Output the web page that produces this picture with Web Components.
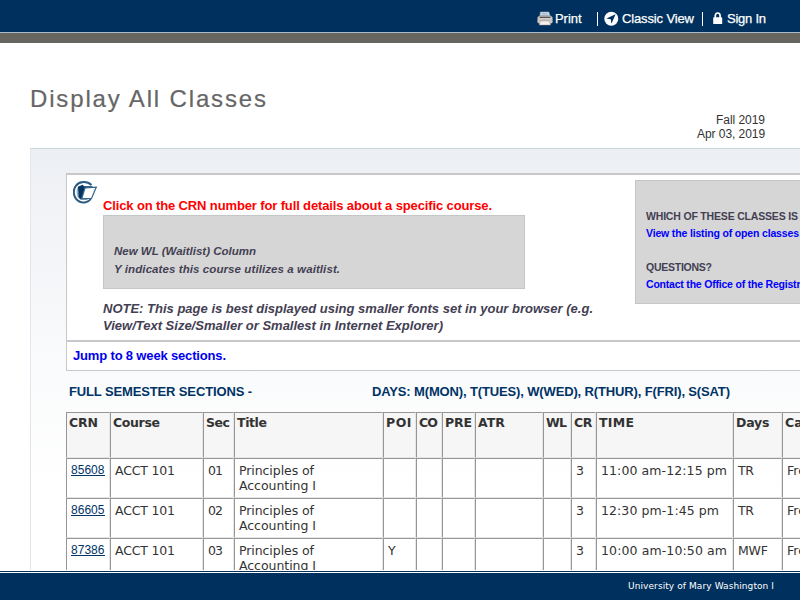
<!DOCTYPE html>
<html lang="en"><head><meta charset="utf-8"><title>Display All Classes</title>
<style>html,body{margin:0;height:100%;overflow:hidden;background:#fff;font-family:"Liberation Sans",Arial,sans-serif;color:#333}</style></head>
<body><classes-page></classes-page>
<script>
class TextLine extends HTMLElement{
  connectedCallback(){
    this.attachShadow({mode:'open'}).innerHTML='<style>:host{display:block;white-space:nowrap}span{display:inline-block;text-decoration:inherit}</style><span><slot></slot></span>';
    const s=this.shadowRoot.querySelector('span'),w=+this.getAttribute('width');
    if(w){s.style.letterSpacing='0px';s.style.letterSpacing=((w-s.getBoundingClientRect().width)/(this.textContent.length-1))+'px';}
  }
}
class TopBar extends HTMLElement{
  constructor(){super();this.attachShadow({mode:'open'}).innerHTML=`<style>
:host{display:flex;height:32px;background:#00305d;border-bottom:1px solid #a9bac8;box-shadow:0 10px #666560;color:#fff;font-size:13px;line-height:15px;-webkit-text-stroke:.25px #fff}
nav{display:flex;padding:11px 0 0 537px}svg{display:block;flex:none}text-line{flex:none}
i{width:1px;height:14px;background:#fff;margin-top:1px}
</style><nav>
<svg width="16" height="15" viewBox="0 0 16 15"><path d="M3 5 3.300 1h8.500l1.200 4z" fill="#dceaf5" stroke="#93a5b5" stroke-width=".6"/><path d="M4.500 2.500h6M4.500 4h7" stroke="#7fa3c6" stroke-width=".7"/><path d="M.8 6 2.500 4.800h11L15.300 6l.4 5-1.500 1.500H2L.3 11z" fill="#d4d2d0" stroke="#8c8a89" stroke-width=".6"/><path d="M2.500 6.300h11" stroke="#44464b" stroke-width="1.200"/><path d="M1 9h14" stroke="#a9a4a0" stroke-width=".8"/><path d="m3.500 10-1.200 4h11.200l-1.200-4z" fill="#f8f0ec" stroke="#9e9995" stroke-width=".5"/></svg>
<text-line width="26.500" style="margin-left:2px;width:27px">Print</text-line><i style="margin-left:15px"></i>
<svg style="margin-left:6px" width="15" height="15" viewBox="0 0 15 15"><circle cx="7.300" cy="7.700" r="7" fill="#fff"/><path d="M11.600 3.300 2.400 7.600 6.800 8.200 7.400 12.700z" fill="#00305d"/></svg>
<text-line width="72" style="margin-left:3px;width:72px">Classic View</text-line><i style="margin-left:8px"></i>
<svg style="margin-left:10px" width="10" height="14" viewBox="0 0 10 14"><path d="M2.300 7V4.800Q2.300 2 4.700 2t2.400 2.800V7" fill="none" stroke="#fff" stroke-width="1.700"/><rect x=".2" y="6.300" width="9" height="6.800" rx=".7" fill="#fff"/></svg>
<text-line width="39" style="margin-left:4px">Sign In</text-line></nav>`}
}
class PageHeading extends HTMLElement{
  constructor(){super();this.attachShadow({mode:'open'}).innerHTML=`<style>
:host{display:flex;height:115px;box-sizing:border-box;width:765px;padding-left:30px;justify-content:space-between}
h1{margin:0;padding-top:52px;font:400 24px/28px "Liberation Sans",Arial,sans-serif;color:#666;-webkit-text-stroke:.2px #666}
aside{padding-top:80px;font-size:12px;line-height:14px;display:flex;flex-direction:column;align-items:flex-end}
</style><h1><text-line width="236">Display All Classes</text-line></h1><aside><text-line width="49">Fall 2019</text-line><text-line width="68">Apr 03, 2019</text-line></aside>`}
}
class GreyPanel extends HTMLElement{
  constructor(){super();this.attachShadow({mode:'open'}).innerHTML=`<style>:host{display:block;box-sizing:border-box;background:#d6d6d6;border:1px solid #c5c6c6;color:#434053}</style><slot></slot>`}
}
class FolderIcon extends HTMLElement{
  constructor(){super();this.attachShadow({mode:'open'}).innerHTML=`<style>:host,svg{display:block}</style>
<svg width="25" height="23" viewBox="0 0 25 23"><path d="M18.500 4C14-.3 6.500.2 3 4.600c-4 5.200-2.200 13.200 3.300 15.900 4 2 9 .8 11.600-2.500" fill="none" stroke="#2c5b84" stroke-width="2"/><path d="M6.500 5C3 8 3.500 15.500 7.500 18.500h7" fill="none" stroke="#7997ae"/><path d="M5 5.800 9.500 3.800 11 5.300h8.500v2L11 18H7.500L5.500 16z" fill="#003462"/><path d="m12 6.900 11.300-.8L18.500 17.500H8.800z" fill="#fff" stroke="#35678e" stroke-width="1.200"/></svg>`}
}
class NoticeBox extends HTMLElement{
  constructor(){super();this.attachShadow({mode:'open'}).innerHTML=`<style>
:host{display:block;width:860px;height:198px;box-sizing:border-box;background:#fff;border:1px solid #c8c8cb;border-top-width:2px;font-weight:700;font-size:13px}
section{display:flex;height:165px}
folder-icon{margin:6px 0 0 6px;width:24px;flex:none}
.main{margin-left:6px;width:532px;flex:none;color:#434053}
.red{color:#f00;line-height:15px;padding-top:23px}
.wl{width:422px;height:74px;margin-top:2px;padding:26px 0 0 10px;font-size:11.500px;line-height:18px;font-style:italic}
.note{font-style:italic;line-height:17px;margin-top:11px}
.right{width:280px;height:124px;flex:none;margin-top:5px;padding:27px 0 0 10px;font-size:10.500px;line-height:17px}
a{color:#00e;text-decoration:none}
.right a{color:#00f}
footer{border-top:2px solid #c8c8cb;height:28px;padding:6px;box-sizing:border-box;line-height:15px}
</style><section><folder-icon></folder-icon><div class="main">
<text-line class="red" width="389">Click on the CRN number for full details about a specific course.</text-line>
<grey-panel class="wl"><text-line width="142">New WL (Waitlist) Column</text-line><text-line width="226">Y indicates this course utilizes a waitlist.</text-line></grey-panel>
<div class="note"><text-line width="490">NOTE: This page is best displayed using smaller fonts set in your browser (e.g.</text-line><text-line width="340">View/Text Size/Smaller or Smallest in Internet Explorer)</text-line></div></div>
<grey-panel class="right"><text-line width="152">WHICH OF THESE CLASSES IS</text-line><a><text-line width="153">View the listing of open classes</text-line></a><br><text-line width="66">QUESTIONS?</text-line><a><text-line width="164">Contact the Office of the Registrar</text-line></a></grey-panel></section>
<footer><a><text-line width="153">Jump to 8 week sections.</text-line></a></footer>`}
}
class ClassTable extends HTMLElement{
  constructor(){super();
    const cols=[44,93,31,149,33,26,33,68,28,25,137,49,80];
    const cell=(t,w,tag='td')=>`<${tag}>${t?`<text-line${w?` width="${w}"`:''}>${t}</text-line>`:''}</${tag}>`;
    const heads=[['CRN',29],['Course',47],['Sec',24],['Title',30],['POI',25.5],['CO',19],['PRE',27],['ATR',27],['WL',21],['CR',18.5],['TIME',35],['Days',33.5],['Campus']];
    const rows=[['85608','01','','11:00 am-12:15 pm',126,'TR',16],['86605','02','','12:30 pm-1:45 pm',118,'TR',16],['87386','03','Y','10:00 am-10:50 am',126,'MWF',30]];
    this.attachShadow({mode:'open'}).innerHTML=`<style>
:host{display:block;font-family:"DejaVu Sans",Verdana,sans-serif;font-size:12.500px;line-height:15px;color:#333}
table{border-collapse:separate;border-spacing:0;table-layout:fixed;width:796px}
td,th{box-sizing:border-box;border-top:1px solid #969696;border-left:1px solid #969696;border-right:1px solid #e6e6e6;border-bottom:1px solid #e6e6e6;vertical-align:top;text-align:left}
th{height:46px;background:#f6f6f6;padding:2px 0 0 2px}td{height:40px;padding:4px 0 0 4px}
a{display:block;color:#003366;font:12px/14px "Liberation Sans",Arial,sans-serif;height:12px;width:34px;border-bottom:1px solid #003366}
</style><table><colgroup>${cols.map(w=>`<col style="width:${w}px">`).join('')}</colgroup><thead><tr>${heads.map(h=>cell(h[0],h[1],'th')).join('')}</tr></thead><tbody>${rows.map(r=>`<tr><td><a><text-line width="33.500">${r[0]}</text-line></a></td>${cell('ACCT 101',60)}${cell(r[1],15)}<td><text-line width="75">Principles of</text-line><text-line width="77">Accounting I</text-line></td>${cell(r[2])}<td></td><td></td><td></td><td></td>${cell('3')}${cell(r[3],r[4])}${cell(r[5],r[6])}${cell('Fredericksburg')}</tr>`).join('')}</tbody></table>`}
}
class PageContent extends HTMLElement{
  constructor(){super();this.attachShadow({mode:'open'}).innerHTML=`<style>
:host{display:block;box-sizing:border-box;width:860px;height:500px;margin-left:30px;padding:24px 0 0 35px;border-top:1px solid #c8d8dc;border-left:1px solid #dfe6ec;background:linear-gradient(#ecf0f3 0,#eff1f5 30px,#fafbfc 220px,#fff 342px)}
header{display:flex;height:41px;box-sizing:border-box;padding:13px 0 0 3px;color:#003366;font-weight:700;font-size:13px;line-height:15px}
header text-line{flex:none}header text-line:first-child{width:303px}
</style><notice-box></notice-box><header><text-line width="183">FULL SEMESTER SECTIONS -</text-line><text-line width="358">DAYS: M(MON), T(TUES), W(WED), R(THUR), F(FRI), S(SAT)</text-line></header><class-table></class-table>`}
}
class PageFooter extends HTMLElement{
  constructor(){super();this.attachShadow({mode:'open'}).innerHTML=`<style>
:host{display:block;height:27px;background:#00305d;border-top:1px solid #fff;box-shadow:0 -1px #00305d,0 -2px #fff;position:relative;color:#fff;font:9px/11px "DejaVu Sans",Verdana,sans-serif}
text-line{padding:8px 0 0 628px}
</style><text-line width="146">University of Mary Washington I</text-line>`}
}
class ClassesPage extends HTMLElement{
  constructor(){super();this.attachShadow({mode:'open'}).innerHTML=`<style>:host{display:flex;flex-direction:column;width:800px;height:600px;overflow:hidden}main{flex:1;min-height:0;overflow:hidden}top-bar{flex:none;position:relative}</style><top-bar></top-bar><main><page-heading></page-heading><page-content></page-content></main><page-footer></page-footer>`}
}
for(const [n,c] of Object.entries({'text-line':TextLine,'top-bar':TopBar,'page-heading':PageHeading,'grey-panel':GreyPanel,'folder-icon':FolderIcon,'notice-box':NoticeBox,'class-table':ClassTable,'page-content':PageContent,'page-footer':PageFooter,'classes-page':ClassesPage}))customElements.define(n,c);
</script></body></html>
